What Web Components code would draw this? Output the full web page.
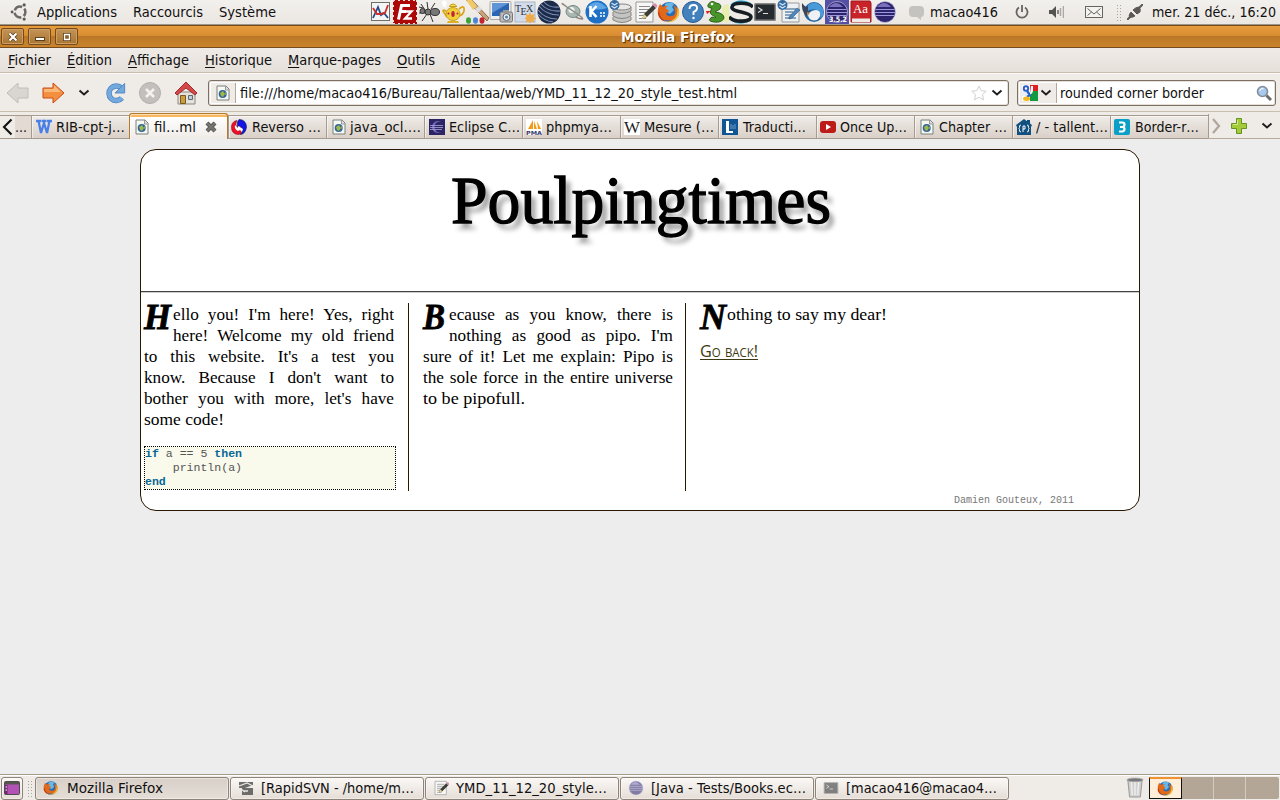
<!DOCTYPE html>
<html lang="fr">
<head>
<meta charset="utf-8">
<title>Mozilla Firefox</title>
<style>
html,body{margin:0;height:100%;overflow:hidden}
body{font:13.5px "DejaVu Sans",sans-serif;color:#101010;background:#ededed}
</style>
</head>
<body>
<desk-top></desk-top>
<script>
const fox = `<circle cx="12" cy="12" r="10" fill="#276bb5"/><path d="M8 4q5-3 9 0l-2 3 2 3-4 4-5-3z" fill="#67b8e8"/><path d="M3 4l3 3q2-2 5-1-2 1-2 3l3 1q-1 3-3 3 1 4 5 3 5 0 4-6 0-3-2-5 6 3 6 8a11 10 0 0 1-21 1Q0 9 3 4z" fill="#e2691a"/><path d="M20 6q4 6 1 11-4 6-11 5 9-2 10-8 1-4 0-8z" fill="#f9bd32"/><path d="M2 11q1 9 9 11Q2 21 1 14z" fill="#b93b12"/>`;
const gedit = `<path d="M3 2h17v20H3z" fill="#f7f7f5" stroke="#999"/><path d="M6 6.500h11M6 9.500h11M6 12.500h11M6 15.500h9M6 18.500h7" stroke="#8a8a8a"/><path d="M9 19l2-5 9-9 3 3-9 9z" fill="#3d3d38"/><path d="M20 5l2-2 3 3-2 2z" fill="#d98ab0"/><path d="M9 19l2-5 3 3z" fill="#e8d489"/>`;
const page = `<path d="M2 1h9l3 3v11H2z" fill="#f6f8f4" stroke="#7b8078"/><path d="M10.500 1v4H14" fill="#ddd" stroke="#999"/><circle cx="7.700" cy="9" r="4" fill="#35639a"/><path d="M5 8l3-2 2 3-2 3-2-1zM10 6l1 3-1 1z" fill="#9cb94d"/>`;
const ecl = `<circle cx="12" cy="12" r="10.500" fill="#2d246e" stroke="#c9c4e4" stroke-width=".7"/><path d="M4 7q7-8 14 0z" fill="#7a70bd"/><path d="M2.500 9.500h19M2 12.500h20M2.500 15.500h19" stroke="#9c98dc" stroke-width="1"/>`;
const term = `<rect x="1" y="3" width="22" height="18" rx="1.500" fill="#888"/><rect x="2.500" y="4.500" width="19" height="15" fill="#242a2e"/><path d="M5 7.500l4 2.500-4 2.500M10 13.500h5" fill="none" stroke="#ddd" stroke-width="1.200"/>`;
const badge = `<circle cx="5.500" cy="5" r="5" fill="#33699f"/><path d="M2.500 3l3 2 3-2M2.500 6l3 2 3-2" stroke="#cfe3f7" fill="none" stroke-width="1.400"/>`;
const ICONS = {
chart:`<rect x="2.500" y="2.500" width="18" height="18" fill="#f4f5f7" stroke="#6f6f68"/><path d="M4 18l5-11 3 8 3-2 4 5" fill="none" stroke="#274a86" stroke-width="1.800"/><path d="M4 8l4 6h3l5-1 3-8" fill="none" stroke="#c92f2b" stroke-width="1.800"/>`,
fz:`<rect width="24" height="24" fill="#ad0808"/><path d="M0 .5h24M0 23.500h24M.5 0v24M23.500 0v24" stroke="#f3dcdc" stroke-dasharray="2 3"/><path d="M5.500 19.500L8.500 5.500H17M7 11.500h6" fill="none" stroke="#fff" stroke-width="3"/><path d="M12 11.500h6.500L12 18.500h7" fill="none" stroke="#fff" stroke-width="2.300"/>`,
ant:`<g stroke="#333" fill="none"><path d="M8 10L4 4M11 9L10 2M14 9l4-6M9 13L2 13M10 14l-5 7M13 14l3 8M6 8L2 7"/></g><g fill="#777" stroke="#333"><circle cx="5.500" cy="11" r="2.500"/><circle cx="11" cy="12" r="3"/><ellipse cx="18" cy="12" rx="4.500" ry="3.500"/></g>`,
tea:`<path d="M1 1q5-2 5 3-2 1-1 4-5-2-4-7z" fill="#fff"/><path d="M6 12q-3-3-4-1l4 6M18 9q6-5 5 2-1 4-5 5" fill="none" stroke="#dba415" stroke-width="1.700"/><ellipse cx="12" cy="14" rx="7" ry="6.500" fill="#f0cf38" stroke="#c9a01c"/><path d="M8 6.500q4-5 8 0z" fill="#f5dc53" stroke="#c9a01c"/><path d="M7 21h10l1 2H6z" fill="#e0b022"/><ellipse cx="12" cy="14" rx="1.700" ry="3" fill="#c1243a"/><circle cx="7.500" cy="13.500" r="1" fill="#c1243a"/><circle cx="16.500" cy="13.500" r="1" fill="#c1243a"/>`,
brush:`<path d="M1 0h6l17 18-2 3z" fill="#caa27a" stroke="#7a5738" stroke-width=".8"/><path d="M1 0h6l5 6-4 4z" fill="#f0ca68"/><path d="M10 9l4-3 3 3-4 4z" fill="#ddd"/><ellipse cx="3.500" cy="20.500" rx="2.500" ry="3.300" fill="#3ba33a"/><ellipse cx="10.500" cy="20.500" rx="2.500" ry="3.300" fill="#4a86d8"/><ellipse cx="17" cy="20.500" rx="2.500" ry="3.300" fill="#c4242d"/>`,
shot:`<rect x="1" y="1.500" width="21" height="18" rx="1" fill="#eee" stroke="#aaa"/><rect x="3" y="3" width="17" height="13" fill="#2c64b4"/><path d="M3 3h17L3 13z" fill="#5f95d6"/><rect x="11" y="12" width="12.500" height="10" rx="1.500" fill="#bbb" stroke="#777"/><path d="M14 10h6v2h-6z" fill="#999"/><circle cx="17.500" cy="17" r="3.500" fill="#e4edf4" stroke="#666"/><circle cx="17.500" cy="17" r="1.500" fill="#5782a8"/>`,
tex:`<rect x="2" y="2" width="20" height="20" fill="#d2dceb" stroke="#a9b5c9"/><text x="2" y="12" font-family="Liberation Serif" font-size="10" fill="#333">T</text><text x="7.500" y="15" font-family="Liberation Serif" font-size="10" fill="#333">E</text><text x="13" y="12" font-family="Liberation Serif" font-size="10" fill="#333">X</text><path d="M17 12l1.500 3 3-1-1 3 3 1.500-3 1 1 3-3-1-1.500 2-1.500-2-3 1 1-3-2-1 2-1.500-1-3 3 1z" fill="#efab47"/>`,
sphere:`<circle cx="12" cy="12" r="11.500" fill="#1c2b49"/><path d="M2 6q7 9 20 9M4 4q7 8 19 7M7 2q5 6 15 5M1 10q7 9 19 9M1 14q6 7 15 8" stroke="#7e92b8" stroke-width="1.100" fill="none"/>`,
planet:`<ellipse cx="12" cy="11.500" rx="7" ry="6" fill="#a9b9b2" stroke="#718a83"/><circle cx="10.500" cy="10" r="3" fill="#eef3f0"/><path d="M7 8Q0 2 1.500 4q3 2 12 8t8 7q-3 0-7-2" fill="none" stroke="#8d8886" stroke-width="1.500"/>`,
k:`<circle cx="12" cy="12" r="11.500" fill="#1f70c5"/><path d="M2 8q9-12 20 0-9 3-20 0" fill="#5ba4e6"/><path d="M5.500 6v11M11.500 6l-5 5.500 5 5.500" stroke="#fff" stroke-width="2.600" fill="none"/><path d="M15 13h5M15 16h5" stroke="#fff" stroke-width="1.500" stroke-dasharray="2 1"/>`,
db:`<g fill="#c4c4c2" stroke="#858585"><path d="M4 17v3q9 5 18 0v-3M4 12v4q9 5 18 0v-4M4 7v4q9 5 18 0V7"/><ellipse cx="13" cy="7" rx="9" ry="3" fill="#e8e8e6"/></g>${badge}`,
gedit, firefox:fox,
help:`<circle cx="12" cy="12" r="10.500" fill="#4381bd" stroke="#285c92"/><path d="M8.500 9q0-4 4-4t3.500 3.500q0 2-3.500 3.500v3" fill="none" stroke="#fff" stroke-width="1.900"/><circle cx="12.500" cy="18" r="1.200" fill="#fff"/>`,
snake:`<path d="M17 8q7-8 7 0v14h-7z" fill="#e9edae"/><path d="M3 5q3-6 8-2 7 1 4 6l-5 3q9 1 9 6-2 5-10 4-8-1-2-5 4 2 4 0-8-3-5-7l1-2q-5 0-4-3z" fill="#48962a" stroke="#2d611c"/><path d="M1 11l5 0-4 3z" fill="#d22"/><circle cx="7" cy="4" r="1.300" fill="#fff"/>`,
swirl:`<path d="M2 5q9-7 20-1M2 20q10 6 20-1" stroke="#3bb0d8" stroke-width="1.700" fill="none"/><path d="M24 7C19 2 4 2 3 7s19 5 19 10-16 6-22 0" fill="none" stroke="#161e24" stroke-width="3.600"/>`,
term,
writer:`<path d="M5 3h17v19H5z" fill="#edf1f4" stroke="#999"/><path d="M8 9h11M8 12h8M8 15h8M8 18h11" stroke="#6889a8" stroke-width="1.400"/><path d="M12 17l8-9 3 2-8 8-3 1z" fill="#4f87bc" stroke="#2b557f" stroke-width=".6"/>${badge}`,
bird:`<circle cx="13" cy="12" r="10" fill="#2464a3"/><path d="M1 3q3 4 5 4l8-4q-5 4-5 8l-4 5Q0 10 1 3z" fill="#39465c"/><path d="M8 13q5-5 11-2 2 5-3 9-8 2-9-5z" fill="#eef1f5"/><path d="M7 5q9-6 15 4 2 6-3 10 2-7-3-9-5-2-9 1z" fill="#4a99d9"/><path d="M6 12l3 1-3 3z" fill="#b9854e"/>`,
ecl352:`<rect width="24" height="24" fill="#5650a5"/>${ecl}<text x="4" y="22" font-family="DejaVu Sans" font-size="7.500" font-weight="bold" textLength="18" lengthAdjust="spacingAndGlyphs" fill="#fff">3.5.2</text>`,
dict:`<path d="M2 1h19l1 2v19H2z" fill="#c82328" stroke="#a4181c"/><path d="M3 18.500h18V22H3z" fill="#efe8e4"/><text x="4" y="13" font-family="Liberation Serif" font-size="12" textLength="15" lengthAdjust="spacingAndGlyphs" fill="#fff">Aa</text>`,
ecl,
ubuntu:`<circle cx="12" cy="12" r="6.500" fill="none" stroke="#6b6965" stroke-width="3" stroke-dasharray="10.600 3.010" stroke-dashoffset="-8.300"/><circle cx="2.500" cy="12" r="1.700" fill="#5b5955"/><circle cx="17" cy="3.500" r="1.900" fill="#5b5955"/><circle cx="17" cy="20.500" r="1.900" fill="#5b5955"/>`,
chat:`<path d="M5 1h7q4 0 4 4v3q0 4-3 4v3l-4-3H5q-4 0-4-4V5q0-4 4-4z" fill="#c5c3c0"/>`,
power:`<path d="M5 3.500a5.500 5.500 0 1 0 6 0M8 1v7" fill="none" stroke="#66645f" stroke-width="1.800"/>`,
vol:`<path d="M1 6h3l4-4v12l-4-4H1z" fill="#55534f"/><path d="M10 6v4" stroke="#66645f" stroke-width="1.500"/><path d="M12.500 4v8M15.500 2v12" stroke="#aaa8a4" stroke-width="1.500"/>`,
mail:`<rect x=".5" y=".5" width="17" height="11" fill="#f5f3f0" stroke="#66645f"/><path d="M2.500 2.500L9 8l6.500-5.500M2.500 9.500l4-3.500M15.500 9.500l-4-3.500" fill="none" stroke="#66645f"/>`,
plug:`<path d="M0 16l4-4M12 4l4-4" stroke="#5b5955" stroke-width="2"/><path d="M4 8l4 4q-3 2-5 1t1-5zM6 6l4 4 3-2q1-3-1-5-3 0-6 3z" fill="#5b5955" stroke="#5b5955"/>`,
back:`<path d="M1 12L12 2v5h10v10H12v5z" fill="#d9d6d1" stroke="#c0bcb6"/>`,
fwd:`<path d="M23 12L12 2v5H2v10h10v5z" fill="#f2903f" stroke="#cc4a18"/><path d="M3 8h10V4.500L20 11H3z" fill="#f9b97b"/>`,
chev:`<path d="M1.500 3.500L6 7.500l4.500-4" fill="none" stroke="#1d1d1d" stroke-width="1.900"/>`,
reload:`<path d="M19 6.500a8 8 0 1 0 .5 11" fill="none" stroke="#4a83c4" stroke-width="6"/><path d="M19 6.500a8 8 0 1 0 .5 11" fill="none" stroke="#74a9de" stroke-width="4.400"/><path d="M22.500 1.500V12H12z" fill="#74a9de" stroke="#4a83c4"/>`,
stop:`<circle cx="12" cy="12" r="10.500" fill="#c3bfbc" stroke="#b3afac"/><path d="M8 8l8 8M16 8l-8 8" stroke="#f4f2f0" stroke-width="2.500"/>`,
home:`<path d="M4 11h17v12H4z" fill="#e4e2dc" stroke="#8a8880"/><path d="M12 1L1 12l2 2 9-7 9 7 2-2z" fill="#d5484a" stroke="#a02c30"/><path d="M6.500 14.500h5v8h-5z" fill="#c99d43" stroke="#7b5a1c"/><path d="M14.500 14.500h4v4h-4z" fill="#b7cde0" stroke="#666"/>`,
page,
star:`<path d="M8 1l2.200 4.700 5 .5-3.700 3.500 1 5.200L8 12.300l-4.500 2.600 1-5.200L.8 6.200l5-.5z" fill="#fff" stroke="#d1d1d1"/>`,
google:`<path d="M0 0h16v16H0z" fill="#fff"/><path d="M8 0h8v6H8z" fill="#e02020"/><path d="M8 6h8v10H8z" fill="#129a43"/><path d="M0 6h8v5H0z" fill="#e8eefa"/><circle cx="4" cy="3.500" r="2.200" fill="#fff" stroke="#2c5fc9" stroke-width="2"/><path d="M5 6l3 4-3 2" stroke="#2c5fc9" stroke-width="2.300" fill="none"/><ellipse cx="4.500" cy="13.700" rx="3.500" ry="2.200" fill="#f5b81c"/><path d="M9 1h2v5q-1 4-3 3z" fill="#fff"/>`,
mag:`<circle cx="6.500" cy="6.500" r="5" fill="#a9c9ee" stroke="#858d98" stroke-width="1.600"/><path d="M3.500 6q1-3 4-2.500" stroke="#fff" fill="none"/><path d="M10.500 10.500l4.500 4.500" stroke="#6a6a6a" stroke-width="3"/>`,
w:`<path d="M0 2h5M5.500 2h5M11 2h5M2.500 2L5 14 8 4l3 10L13.500 2" fill="none" stroke="#4a80e6" stroke-width="2.300"/>`,
rev:`<path d="M8 .5q7 0 7.500 7.500-1 7-6 7.500 4-6-1-8.500l-2 2V3z" fill="#1414e6" stroke="#000a55" stroke-width=".6"/><path d="M7 15.500Q0 15 .5 7q1-5 5.500-5.500-3 5.500 2 8l2-1.500v7z" fill="#ed1028" stroke="#8b1020" stroke-width=".6"/><path d="M4 6l3 3v-2l5 3-1 3-2-2-2 1q-4-2-3-6z" fill="#fff"/>`,
eclf:`<rect width="16" height="16" fill="#2c2463"/><circle cx="9" cy="8" r="6" fill="#7269b8"/><circle cx="11" cy="8" r="5.500" fill="#2c2463"/><path d="M1 6.500h13M1 8.500h13M1 10.500h12" stroke="#a9a5dc" stroke-width=".8"/>`,
pma:`<rect width="16" height="16" fill="#fff"/><path d="M2 10l5-9v9zM8 10V2l3 8zM12 10l-1-8 4 8z" fill="#f29b17"/><text x="0" y="15.500" font-family="DejaVu Sans" font-size="5.500" font-weight="bold" textLength="16" lengthAdjust="spacingAndGlyphs" fill="#3b3b6c">PMA</text>`,
wiki:`<rect width="16" height="16" fill="#fff"/><text x="0" y="13.500" font-family="Liberation Serif" font-size="17" textLength="16" lengthAdjust="spacingAndGlyphs" fill="#222">W</text>`,
ling:`<rect width="16" height="16" fill="#115694"/><path d="M4 2h3v10h4v2H4z" fill="#fff"/><path d="M9 5v5M11 6v4M13 5v5" stroke="#6d9bc7"/>`,
yt:`<rect y="2" width="16" height="12" rx="3" fill="#bd1b18"/><path d="M6 5l5 3-5 3z" fill="#fff"/>`,
house:`<path d="M8 0l8 6-1 2v8H1V8L0 6z" fill="#12507f"/><path d="M11 1h3v4h-3z" fill="#12507f"/><path d="M5 6q-2 0-1.500 2.500L3 9.500l.5 1Q3 13 5 13M11 6q2 0 1.500 2.500l.5 1-.5 1Q13 13 11 13M7 13V7h2v3H7" stroke="#fff" fill="none"/>`,
three:`<rect width="16" height="16" rx="2" fill="#0b9fc7"/><path d="M5 3.500h3.500q2 0 2 2T8.500 8H6h2.500q2 0 2 2t-2 2.500H5" fill="none" stroke="#fff" stroke-width="2.200"/>`,
close:`<path d="M3 3l8 8M11 3l-8 8" stroke="#5f5d5a" stroke-width="4.200"/><path d="M3 3l8 8M11 3l-8 8" stroke="#77756f" stroke-width="2"/>`,
plus:`<path d="M5.500.5h5v5h5v5h-5v5h-5v-5h-5v-5h5z" fill="#a4cb3a" stroke="#659422"/><path d="M6.500 2v4.500H2" stroke="#d4e78c" fill="none"/>`,
desk:`<rect x=".5" y=".5" width="15" height="13" rx="1" fill="#b352b5" stroke="#4d4c48"/><path d="M1 1h14v2.500H1z" fill="#55574e"/><path d="M1 4h2.500v9H1z" fill="#742576"/><path d="M1.500 6h1.500M1.500 9h1.500" stroke="#fff"/>`,
svn:`<path d="M1 2h14v3L7 8H1zM4 8h11v7H4z" fill="#6d6c6a"/><path d="M1 6l8-3 6 3M5 11h5M3 9l4 3" stroke="#e8e6e3" fill="none" stroke-width="1.300"/>`,
trash:`<path d="M2 3h16l-2 19H4z" fill="#cfd0cf" stroke="#92938f"/><path d="M6 5l1 15M10 5v15M14 5l-1 15" stroke="#f0f0ef" stroke-width="1.500"/><ellipse cx="10" cy="3" rx="9" ry="2" fill="#76777a" stroke="#a9aaa8"/>`
};

class UiIcon extends HTMLElement{
  connectedCallback(){
    const r=this.attachShadow({mode:'open'}),w=this.getAttribute('w')||16,h=this.getAttribute('h')||w;
    r.innerHTML=`<style>:host{display:block;flex:none;width:${w}px;height:${h}px}svg{display:block;overflow:hidden}</style><svg width="${w}" height="${h}" viewBox="0 0 ${this.getAttribute('vb')||w+' '+h}">${ICONS[this.getAttribute('name')]}</svg>`;
  }
}
customElements.define('ui-icon',UiIcon);

/* A single line of text set to an exact measure. */
class FitText extends HTMLElement{
  connectedCallback(){
    const r=this.attachShadow({mode:'open'}),w=+this.getAttribute('w');
    r.innerHTML=`<style>:host{display:block;flex:none;width:${w}px;white-space:pre}span{display:inline-block;transform-origin:0 50%}</style><span><slot></slot></span>`;
    const s=r.querySelector('span');
    s.style.transform=`scaleX(${w/s.getBoundingClientRect().width})`;
  }
}
customElements.define('fit-text',FitText);

const make=(tag,html)=>customElements.define(tag,class extends HTMLElement{
  connectedCallback(){
    if(this.shadowRoot)return;
    const t=document.createElement('template');t.innerHTML=html;
    this.attachShadow({mode:'open'}).append(t.content.cloneNode(true));
  }
});

const row=['chart','fz','ant','tea','brush','shot','tex','sphere','planet','k','db','gedit','firefox','help','snake','swirl','term','writer','bird','ecl352','dict','ecl'];
make('top-panel',`<style>
:host{display:flex;align-items:center;height:25px;background:linear-gradient(#f2f0ed,#ebe7e2);border-bottom:1px solid #9c958a;box-sizing:border-box;line-height:22px}
.dots{width:5px;height:17px;background:radial-gradient(circle,#aaa59c 0.7px,transparent 1px) 0 0/3px 3px}
</style><ui-icon name="ubuntu" w="20" vb="24 24" style="margin:0 7px 0 10px"></ui-icon>
<fit-text w="80" style="margin-right:16px">Applications</fit-text><fit-text w="70" style="margin-right:16px">Raccourcis</fit-text><fit-text w="57" style="margin-right:93px">Système</fit-text>
${row.map(n=>`<ui-icon name="${n}" w="24"></ui-icon>`).join('')}
<ui-icon name="chat" w="17" style="margin:3px 5px 0 11px"></ui-icon><fit-text w="68">macao416</fit-text>
<ui-icon name="power" style="margin:0 18px 0 16px"></ui-icon><ui-icon name="vol" style="margin-right:21px"></ui-icon><ui-icon name="mail" w="18" h="12" style="margin-right:13px"></ui-icon>
<div class="dots"></div><ui-icon name="plug" style="margin:0 9px 0 6px"></ui-icon><fit-text w="124">mer. 21 déc., 16:20</fit-text>`);

make('title-bar',`<style>
:host{display:flex;align-items:center;height:23px;box-sizing:border-box;background:linear-gradient(#e69b3d,#d98d31 45%,#b97727 50%,#cb842b);border:solid #734b1e;border-width:1px 0;padding-left:1px;gap:2px}
.b{width:21px;height:15px;border:1px solid #734b1e;border-radius:2px;background:linear-gradient(#c39456,#aa7531);box-shadow:inset 0 0 0 1px #cf9e63;display:grid;place-items:center}
fit-text{font-weight:bold;color:#fff;text-shadow:1px 1px 1px #4a2e0d;margin-left:541px;line-height:20px}
svg{display:block}
</style>
<div class="b"><svg width="10" height="10"><path d="M1.500 1.500l7 7M8.500 1.500l-7 7" stroke="#5b4020" stroke-width="3.800"/><path d="M1.500 1.500l7 7M8.500 1.500l-7 7" stroke="#fff" stroke-width="2.200"/></svg></div>
<div class="b" style="margin-left:2px"><svg width="10" height="10"><path d="M0 5h10v4H0z" fill="#5b4020"/><path d="M1 7h8" stroke="#fff" stroke-width="2"/></svg></div>
<div class="b" style="margin-left:2px"><svg width="10" height="10"><path d="M1 1h8v8H1z" fill="#5b4020"/><path d="M2.500 2.500h5v5h-5z" fill="#8f6127" stroke="#fff" stroke-width="1.300"/></svg></div>
<fit-text w="113">Mozilla Firefox</fit-text>`);

make('menu-bar',`<style>:host{display:flex;height:24px;padding-left:8px;line-height:25px;background:linear-gradient(#efebe7,#e6e0da);border-bottom:1px solid #c9bdb0}
fit-text{margin-right:16px}u{text-underline-offset:2px}</style>
<fit-text w="43"><u>F</u>ichier</fit-text><fit-text w="45"><u>É</u>dition</fit-text><fit-text w="61"><u>A</u>ffichage</fit-text><fit-text w="67"><u>H</u>istorique</fit-text><fit-text w="93"><u>M</u>arque-pages</fit-text><fit-text w="38"><u>O</u>utils</fit-text><fit-text w="29">Aid<u>e</u></fit-text>`);

make('nav-bar',`<style>:host{display:flex;align-items:center;height:39px;box-sizing:border-box;background:#efebe7;border-top:1px solid #fbfaf8;border-bottom:1px solid #c9bdb0;padding-left:6px}
.f{display:flex;align-items:center;height:26px;box-sizing:border-box;background:#fff;border:1px solid #7c7065;box-shadow:inset 0 0 0 1px #e5e0da;border-radius:3px;line-height:18px}
.i{display:flex;align-items:center;height:20px;background:#efebe7;border-right:1px solid #b5a89a;box-sizing:border-box}</style>
<ui-icon name="back" w="24" style="margin-right:11px"></ui-icon><ui-icon name="fwd" w="24" style="margin-right:13px"></ui-icon><ui-icon name="chev" w="12" h="11" style="margin-right:13px"></ui-icon><ui-icon name="reload" w="22" vb="24 24" style="margin:0 12px 0 1px"></ui-icon><ui-icon name="stop" w="24" style="margin-right:12px"></ui-icon><ui-icon name="home" w="24" style="margin-right:10px"></ui-icon>
<div class="f" style="width:801px"><div class="i" style="width:25px;margin-left:2px;padding-left:4px"><ui-icon name="page"></ui-icon></div><fit-text w="497" style="margin:0 234px 0 4px">file:///home/macao416/Bureau/Tallentaa/web/YMD_11_12_20_style_test.html</fit-text><ui-icon name="star" style="margin-right:4px"></ui-icon><ui-icon name="chev" w="12" h="11"></ui-icon></div>
<div class="f" style="width:259px;margin-left:8px"><div class="i" style="width:37px;margin-left:2px;padding-left:2px;gap:2px"><ui-icon name="google"></ui-icon><ui-icon name="chev" w="12" h="11"></ui-icon></div><fit-text w="144" style="margin:0 52px 0 3px">rounded corner border</fit-text><ui-icon name="mag"></ui-icon></div>`);

make('browser-tab',`<style>:host{display:flex;align-items:center;box-sizing:border-box;flex:none;width:98px;height:24px;margin-top:2px;padding-left:4px;border:1px solid #a79a8e;border-right:0;background:linear-gradient(#f0ece8,#d9d0c8);box-shadow:inset 1px 1px #fff8;overflow:hidden;line-height:24px}
:host([active]){background:linear-gradient(#f7b85e 3px,#fff 3px,#efebe7);border:1px solid #b5792e;border-bottom:0;border-radius:3px 3px 0 0;margin-top:0;height:26px;width:99px;padding-left:4px}</style><slot></slot>`);

const tab=(i,t,w,g=4,p=4)=>`<browser-tab style="padding-left:${p}px"><ui-icon name="${i}" style="margin-right:${g}px"></ui-icon><fit-text w="${w}">${t}</fit-text></browser-tab>`;
make('tab-strip',`<style>:host{display:flex;align-items:flex-start;height:27px;box-sizing:border-box;background:#efebe7;padding-top:1px;box-shadow:inset 0 -1px #b8aa9d}
svg{display:block;flex:none}.s{width:31px;height:24px;margin-top:2px;display:flex;align-items:center;background:linear-gradient(90deg,#efebe7 15px,#e2dad3 15px);border:solid #a79a8e;border-width:1px 0;box-sizing:border-box}</style>
<div class="s"><svg width="15" height="18"><path d="M11.500 1.500L4 9l7.500 7.500" fill="none" stroke="#111" stroke-width="2.100"/></svg><fit-text w="12">…</fit-text></div>
${tab('w','RIB-cpt-j…',69)}
<browser-tab active><ui-icon name="page" style="margin-right:4px"></ui-icon><fit-text w="42" style="margin-right:8px">fil…ml</fit-text><ui-icon name="close" w="14"></ui-icon></browser-tab>
${tab('rev','Reverso …',69,5,2)}${tab('page','java_ocl.…',71,3)}${tab('eclf','Eclipse C…',71)}${tab('pma','phpmya…',66,4,3)}${tab('wiki','Mesure (…',70,4,3)}${tab('ling','Traducti…',63,5,3)}${tab('yt','Once Up…',67,4,3)}${tab('page','Chapter …',68)}${tab('house','/ - tallent…',72,4,3)}${tab('three','Border-r…',64,5,3)}
<svg width="16" height="24" style="border-left:1px solid #a79a8e;margin-top:1px"><path d="M4 5l6 7-6 7" fill="none" stroke="#b0a69b" stroke-width="2.200"/></svg>
<ui-icon name="plus" style="margin:5px 14px 0 6px"></ui-icon><ui-icon name="chev" w="12" h="11" style="margin-top:7px"></ui-icon>`);

make('drop-cap',`<style>:host{float:left;height:42px;font:italic bold 35px/28px "Liberation Serif",serif;-webkit-text-stroke:.8px #000;box-sizing:border-box}</style><slot></slot>`);
make('text-column',`<style>:host{display:block;box-sizing:border-box;height:188px;padding-top:1px}</style><slot></slot>`);
make('code-block',`<style>:host{display:block;box-sizing:border-box;width:252px;height:44px;margin-top:16px;border:1px dotted #000;background:#f9f9ec;font:11.55px/14px "Liberation Mono",monospace;color:#555}
div{white-space:pre}b{color:#066696}</style><div><b>if</b> a == 5 <b>then</b></div><div>    println(a)</div><div><b>end</b></div>`);

make('web-page',`<style>:host{display:block;background:#ededed;padding-top:10px}
article{width:1000px;height:362px;box-sizing:border-box;margin:0 auto;background:#fff;border:1px solid #2b1700;border-radius:16px;font:17.2px/21px "Liberation Serif",serif;color:#000}
header{height:141px;border-bottom:1px solid #444;box-shadow:0 1px #ccc;width:998px}
h1{margin:0;padding:13px 0 0 310px;font:68px/74px "Liberation Serif",serif;-webkit-text-stroke:1.3px #000;text-shadow:5px 6px 5px #999}
main{display:flex;margin-top:11px}
.j{text-align-last:justify;white-space:nowrap}
.c1,.c2{box-sizing:content-box;width:250px;height:187px;border-right:1px solid #2b1700}
.c1{padding:1px 14px 0 3px}
.c2{padding:1px 12px 0 0;margin-left:14px}
.c3{margin-left:14px}
a{display:table;clear:left;font:17px/17px "Open Sans",sans-serif;font-variant:small-caps;color:#3c3a10;border-bottom:1px solid #3c3a10;height:17px}
footer{font:10px/14px "Liberation Mono",monospace;color:#777;padding:3px 0 0 813px}
</style><article><header><h1><fit-text w="380">Poulpingtimes</fit-text></h1></header>
<main><text-column class="c1"><drop-cap style="width:29px"><fit-text w="27">H</fit-text></drop-cap><div class="j">ello you! I'm here! Yes, right</div><div class="j">here! Welcome my old friend</div><div class="j">to this website. It's a test you</div><div class="j">know. Because I don't want to</div><div class="j">bother you with more, let's have</div><fit-text w="80">some code!</fit-text><code-block></code-block></text-column>
<text-column class="c2"><drop-cap style="width:26px"><fit-text w="22">B</fit-text></drop-cap><div class="j">ecause as you know, there is</div><div class="j">nothing as good as pipo. I'm</div><div class="j">sure of it! Let me explain: Pipo is</div><div class="j">the sole force in the entire universe</div><fit-text w="102">to be pipofull.</fit-text></text-column>
<text-column class="c3"><drop-cap style="width:27px;height:38px"><fit-text w="26">N</fit-text></drop-cap><fit-text w="160">othing to say my dear!</fit-text><a><fit-text w="58">Go back!</fit-text></a></text-column></main>
<footer>Damien Gouteux, 2011</footer></article>`);

const task=(i,vb,t,w,a='')=>`<div class="t ${a}"><ui-icon name="${i}" vb="${vb}" style="margin:0 ${i=='firefox'?8:7}px 0 7px;${i=='ecl'||i=='term'?'opacity:.55':''}"></ui-icon><fit-text w="${w}">${t}</fit-text></div>`;
make('task-bar',`<style>:host{display:flex;align-items:center;box-sizing:border-box;height:26px;background:#efebe7;border-top:1px solid #a69c88;box-shadow:inset 0 1px #fff;padding:1px 0 0 1px;line-height:20px}
.t,.d{display:flex;align-items:center;box-sizing:border-box;height:23px;border:1px solid #8d8379;border-radius:3px;background:linear-gradient(#faf8f6,#e5ddd6);box-shadow:inset 0 0 0 1px #fff6}
.t{width:194px;margin-right:1px}.a{background:linear-gradient(#d8d0c8,#e5ded6)}
.d{width:22px;padding-left:2px}.dots{width:5px;height:17px;margin:0 3px 0 4px;background:radial-gradient(circle,#aaa59c .7px,transparent 1px) 0 0/3px 3px}
.w{display:flex;width:130px;height:22px;background:#b3a697;border-radius:2px}.w i{box-sizing:border-box;width:32px;border-right:1px solid #d4ccc2}.w i:last-child{border:0}.w .on{width:33px;background:#ffeeda;border:1px solid #111;border-top:2px solid #ef922f;padding:1px 0 0 7px}</style>
<div class="d"><ui-icon name="desk" h="14"></ui-icon></div><div class="dots"></div>
${task('firefox','24 24','Mozilla Firefox',96,'a')}${task('svn','16 16','[RapidSVN - /home/m…',153)}${task('gedit','24 24','YMD_11_12_20_style…',151)}${task('ecl','24 24','[Java - Tests/Books.ec…',155)}${task('term','24 24','[macao416@macao4…',151)}
<ui-icon name="trash" w="18" h="22" vb="20 24" style="margin:0 5px 0 116px"></ui-icon><div class="w"><i class="on"><ui-icon name="firefox" w="17" vb="24 24"></ui-icon></i><i></i><i></i><i></i></div>`);

make('desk-top',`<style>:host{display:flex;flex-direction:column;width:1280px;height:800px;overflow:hidden}:host>*{flex:none}web-page{flex:1 1 0;min-height:0;box-sizing:border-box}</style>
<top-panel></top-panel><title-bar></title-bar><menu-bar></menu-bar><nav-bar></nav-bar><tab-strip></tab-strip><web-page style="flex:1 1 0"></web-page><task-bar></task-bar>`);
</script>
</body>
</html>
